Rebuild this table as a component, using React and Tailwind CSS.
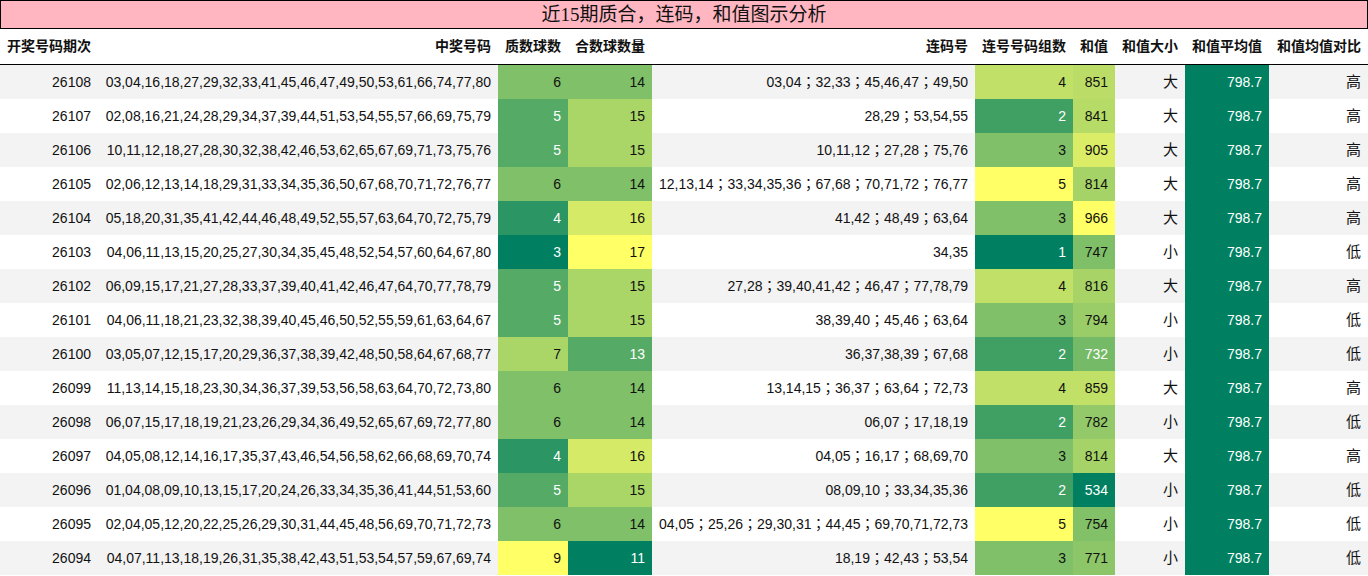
import React from "react";

const rows = [
  [26108, "03,04,16,18,27,29,32,33,41,45,46,47,49,50,53,61,66,74,77,80", 6, 14, "03,04；32,33；45,46,47；49,50", 4, 851, "大", "高"],
  [26107, "02,08,16,21,24,28,29,34,37,39,44,51,53,54,55,57,66,69,75,79", 5, 15, "28,29；53,54,55", 2, 841, "大", "高"],
  [26106, "10,11,12,18,27,28,30,32,38,42,46,53,62,65,67,69,71,73,75,76", 5, 15, "10,11,12；27,28；75,76", 3, 905, "大", "高"],
  [26105, "02,06,12,13,14,18,29,31,33,34,35,36,50,67,68,70,71,72,76,77", 6, 14, "12,13,14；33,34,35,36；67,68；70,71,72；76,77", 5, 814, "大", "高"],
  [26104, "05,18,20,31,35,41,42,44,46,48,49,52,55,57,63,64,70,72,75,79", 4, 16, "41,42；48,49；63,64", 3, 966, "大", "高"],
  [26103, "04,06,11,13,15,20,25,27,30,34,35,45,48,52,54,57,60,64,67,80", 3, 17, "34,35", 1, 747, "小", "低"],
  [26102, "06,09,15,17,21,27,28,33,37,39,40,41,42,46,47,64,70,77,78,79", 5, 15, "27,28；39,40,41,42；46,47；77,78,79", 4, 816, "大", "高"],
  [26101, "04,06,11,18,21,23,32,38,39,40,45,46,50,52,55,59,61,63,64,67", 5, 15, "38,39,40；45,46；63,64", 3, 794, "小", "低"],
  [26100, "03,05,07,12,15,17,20,29,36,37,38,39,42,48,50,58,64,67,68,77", 7, 13, "36,37,38,39；67,68", 2, 732, "小", "低"],
  [26099, "11,13,14,15,18,23,30,34,36,37,39,53,56,58,63,64,70,72,73,80", 6, 14, "13,14,15；36,37；63,64；72,73", 4, 859, "大", "高"],
  [26098, "06,07,15,17,18,19,21,23,26,29,34,36,49,52,65,67,69,72,77,80", 6, 14, "06,07；17,18,19", 2, 782, "小", "低"],
  [26097, "04,05,08,12,14,16,17,35,37,43,46,54,56,58,62,66,68,69,70,74", 4, 16, "04,05；16,17；68,69,70", 3, 814, "大", "高"],
  [26096, "01,04,08,09,10,13,15,17,20,24,26,33,34,35,36,41,44,51,53,60", 5, 15, "08,09,10；33,34,35,36", 2, 534, "小", "低"],
  [26095, "02,04,05,12,20,22,25,26,29,30,31,44,45,48,56,69,70,71,72,73", 6, 14, "04,05；25,26；29,30,31；44,45；69,70,71,72,73", 5, 754, "小", "低"],
  [26094, "04,07,11,13,18,19,26,31,35,38,42,43,51,53,54,57,59,67,69,74", 9, 11, "18,19；42,43；53,54", 3, 771, "小", "低"],
];

const headers = [
  "开奖号码期次",
  "中奖号码",
  "质数球数",
  "合数球数量",
  "连码号",
  "连号号码组数",
  "和值",
  "和值大小",
  "和值平均值",
  "和值均值对比",
];

// three-colour scale: low = teal, middle = green, high = yellow
const LOW = [0, 128, 96];
const MID = [128, 192, 104];
const HIGH = [255, 255, 102];

const mix = (a, b, t) => a.map((v, i) => Math.round(v + (b[i] - v) * t));

const scale = (v, min, max) => {
  const mid = (min + max) / 2;
  const rgb = v <= mid ? mix(LOW, MID, (v - min) / (mid - min)) : mix(MID, HIGH, (v - mid) / (max - mid));
  const lum = (rgb[0] * 76 + rgb[1] * 151 + rgb[2] * 29) / 256;
  return { backgroundColor: `rgb(${rgb.join(",")})`, color: lum < 158 ? "#ffffff" : "#111111" };
};

const range = (idx) => {
  const vals = rows.map((r) => r[idx]);
  return [Math.min(...vals), Math.max(...vals)];
};

const [pMin, pMax] = range(2);
const [cMin, cMax] = range(3);
const [gMin, gMax] = range(5);
const [sMin, sMax] = range(6);

const cols = "grid grid-cols-[98px_400px_70px_84px_323px_98px_42px_70px_84px_99px]";
const cell = "flex items-center justify-end pr-[7px] whitespace-nowrap";

export default function App() {
  return (
    <div
      className="w-[1368px] h-[576px] bg-white text-[#111] overflow-hidden"
      style={{ fontFamily: '"Liberation Sans", "Noto Sans CJK SC", sans-serif' }}
    >
      <div
        className="h-[29px] border border-black bg-[#ffb6c1] flex items-center justify-center text-[19px] leading-none"
        style={{ fontFamily: '"Liberation Serif", "Noto Sans CJK SC", serif' }}
      >
        近15期质合，连码，和值图示分析
      </div>

      <div className={`${cols} h-[36px] border-b border-black`}>
        {headers.map((h) => (
          <div key={h} className={`${cell} text-[14px] font-bold`}>
            {h}
          </div>
        ))}
      </div>

      {rows.map((r, i) => (
        <div key={r[0]} className={`${cols} h-[34px] text-[14px] ${i % 2 === 0 ? "bg-[#f3f3f3]" : "bg-white"}`}>
          <div className={cell}>{r[0]}</div>
          <div className={cell}>{r[1]}</div>
          <div className={cell} style={scale(r[2], pMin, pMax)}>{r[2]}</div>
          <div className={cell} style={scale(r[3], cMin, cMax)}>{r[3]}</div>
          <div className={cell} style={{ fontFamily: '"Liberation Sans", "Noto Sans CJK TC", sans-serif' }}>
            {r[4]}
          </div>
          <div className={cell} style={scale(r[5], gMin, gMax)}>{r[5]}</div>
          <div className={cell} style={scale(r[6], sMin, sMax)}>{r[6]}</div>
          <div className={`${cell} text-[15px]`}>{r[7]}</div>
          <div className={`${cell} bg-[#008060] text-white`}>798.7</div>
          <div className={`${cell} text-[15px]`}>{r[8]}</div>
        </div>
      ))}
    </div>
  );
}
